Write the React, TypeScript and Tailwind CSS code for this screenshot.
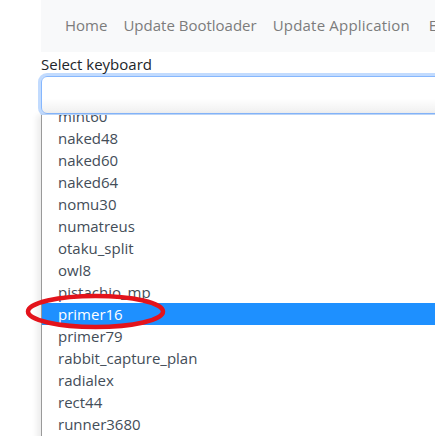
import React from "react";

const items = [
  "mint60",
  "naked48",
  "naked60",
  "naked64",
  "nomu30",
  "numatreus",
  "otaku_split",
  "owl8",
  "pistachio_mp",
  "primer16",
  "primer79",
  "rabbit_capture_plan",
  "radialex",
  "rect44",
  "runner3680",
  "s9",
];

export default function App() {
  return (
    <div
      className="relative w-[435px] h-[436px] overflow-hidden bg-white"
      style={{ fontFamily: '"Open Sans", "Noto Sans", sans-serif' }}
    >
      <div className="ml-[41px] w-[640px]">
        <nav className="flex h-[52px] items-center bg-[#f8f9fa] pl-[16px] pb-[2px] text-[15px] text-[#7c7c7c]">
          <span className="px-[8px]">Home</span>
          <span className="px-[8px]">Update Bootloader</span>
          <span className="px-[8px] tracking-[0.2px]">Update Application</span>
          <span className="px-[8px] ml-[3px]">Erase</span>
        </nav>
        <div className="h-[24px] text-[15px] leading-[24px] text-[#212529]">Select keyboard</div>
        <div className="h-[38px] rounded-[6px] border border-[#86b7fe] bg-gradient-to-b from-white from-60% to-[#f0f0f0] shadow-[0_0_0_3px_rgba(13,110,253,0.25)]" />
        <div className="relative z-10 mt-[1px] h-[330px] overflow-hidden border-l border-[#9a9a9a] bg-white shadow-[-4px_0_6px_rgba(0,0,0,0.08)]">
          <div className="-mt-[10px]">
            {items.map((it) => (
              <div
                key={it}
                className={
                  "h-[22px] pl-[16px] text-[15px] leading-[22px] " +
                  (it === "primer16" ? "bg-[#1e90ff] text-white" : "text-[#434d58]")
                }
              >
                {it}
              </div>
            ))}
          </div>
        </div>
      </div>
      <svg
        className="absolute left-0 top-0 z-20 pointer-events-none"
        width="435"
        height="436"
        viewBox="0 0 435 436"
      >
        <ellipse cx="95.5" cy="311.5" rx="67.5" ry="15.5" fill="none" stroke="#e3131b" strokeWidth="4.5" />
      </svg>
    </div>
  );
}
